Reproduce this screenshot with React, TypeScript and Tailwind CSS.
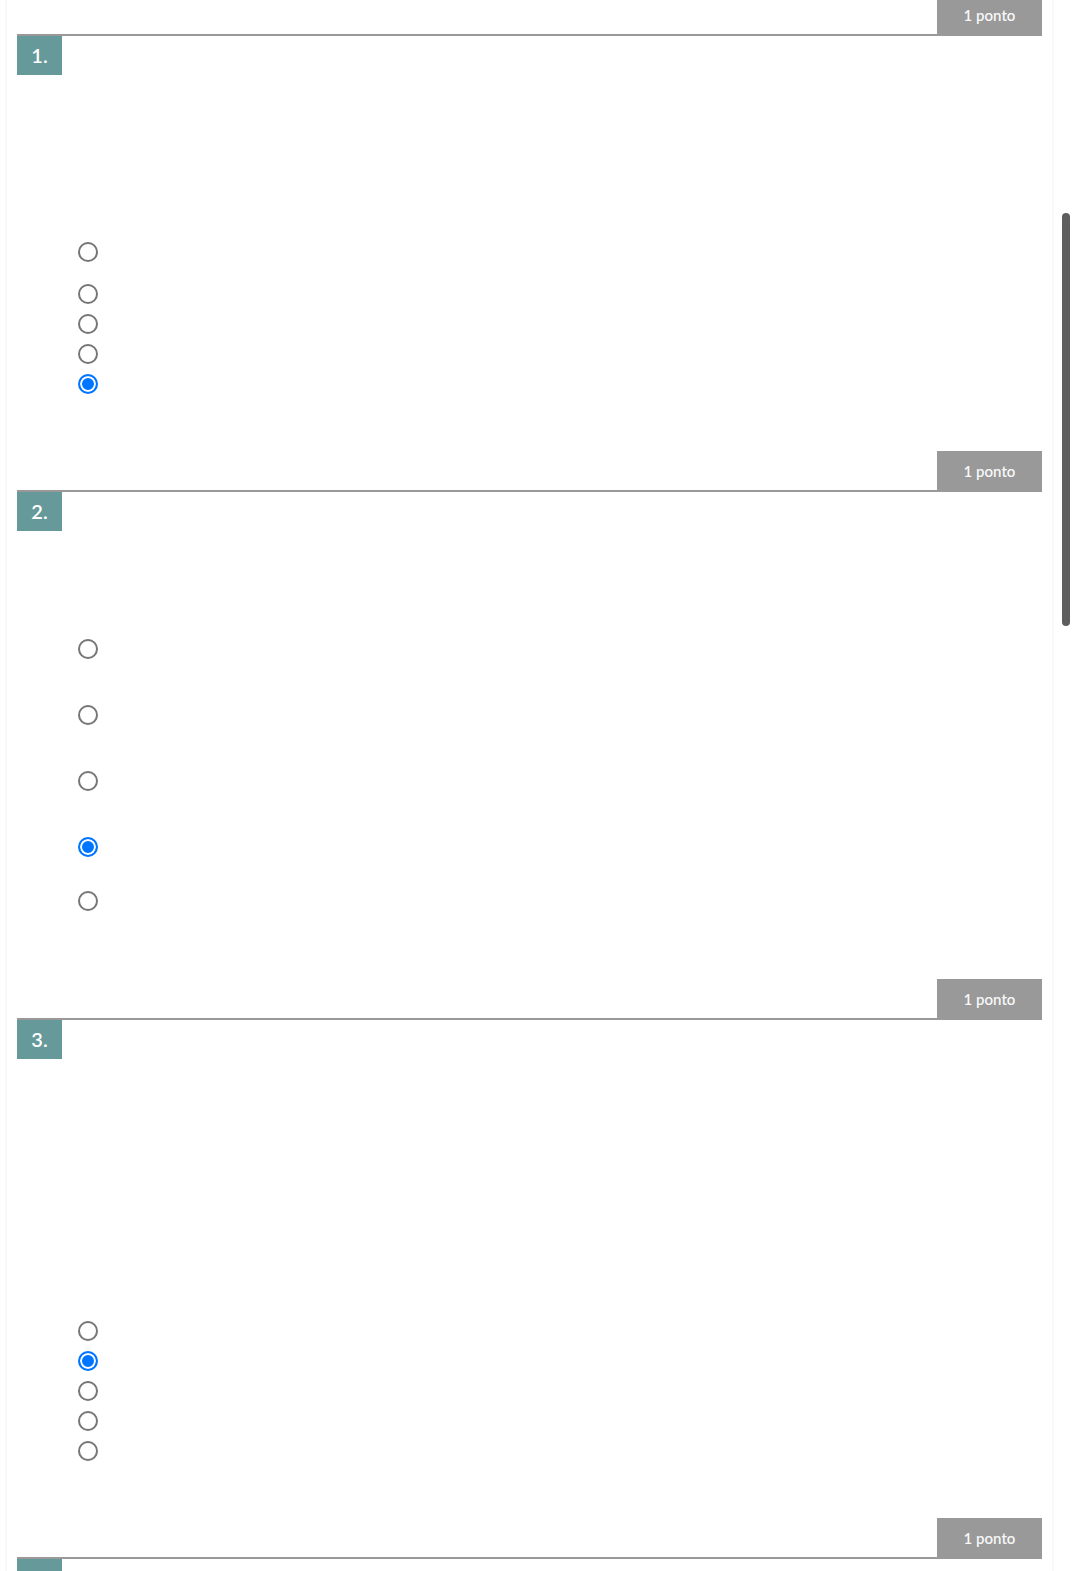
import React from "react";

type Question = {
  num: number;
  first: number; // gap from number box to first radio
  gaps: number[]; // gaps between radios
  after: number; // gap after last radio
  checked: number;
};

const questions: Question[] = [
  { num: 1, first: 167, gaps: [22, 10, 10, 10], after: 57, checked: 4 },
  { num: 2, first: 108, gaps: [46, 46, 46, 34], after: 68, checked: 3 },
  { num: 3, first: 262, gaps: [10, 10, 10, 10], after: 57, checked: 1 },
];

const Header = ({ first }: { first?: boolean }) => (
  <div
    className={`flex justify-end border-b-2 border-[#999999] ${
      first ? "-mt-[5px]" : ""
    }`}
  >
    <div className="flex h-[39px] w-[105px] items-center justify-center bg-[#999999] pt-[1px] text-[15px] font-semibold text-[#f7f7f7]">
      1 ponto
    </div>
  </div>
);

const NumberBox = ({ num }: { num?: number }) => (
  <div className="flex h-[39px] w-[45px] items-center justify-center bg-[#669999] pb-[2px] text-[20px] font-semibold text-white">
    {num ? `${num}.` : ""}
  </div>
);

const QuestionBlock = ({ q }: { q: Question }) => (
  <div>
    <Header first={q.num === 1} />
    <NumberBox num={q.num} />
    <div className="pl-[61px]" style={{ paddingTop: q.first, paddingBottom: q.after }}>
      {[0, 1, 2, 3, 4].map((i) => (
        <div key={i} style={{ marginTop: i === 0 ? 0 : q.gaps[i - 1] }} className="flex h-5 items-center">
          <input
            type="radio"
            name={`q${q.num}`}
            defaultChecked={i === q.checked}
            className="m-0 h-5 w-5 appearance-none rounded-full border-2 border-[#767676] bg-white checked:border-[#0075ff] checked:bg-[#0075ff] checked:shadow-[inset_0_0_0_2px_#ffffff]"
          />
        </div>
      ))}
    </div>
  </div>
);

export default function App() {
  return (
    <div
      className="relative h-[1571px] overflow-hidden bg-white"
      style={{ fontFamily: "Lato, 'Liberation Sans', sans-serif" }}
    >
      <div className="ml-[7px] min-h-[1600px] w-[1045px] bg-white px-[10px] shadow-[0_0_4px_rgba(0,0,0,0.08)]">
        {questions.map((q) => (
          <QuestionBlock key={q.num} q={q} />
        ))}
        <Header />
        <NumberBox />
      </div>

      {/* scrollbar thumb */}
      <div className="absolute right-[2px] top-[213px] h-[413px] w-2 rounded-full bg-[#5e5e5e]" />
    </div>
  );
}
